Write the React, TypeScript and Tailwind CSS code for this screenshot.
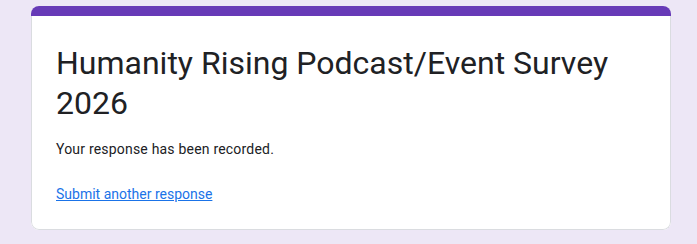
// Confirmation page: form header card with a purple top bar

export default function App() {
  return (
    <div className="min-h-screen bg-[#ede7f6] pt-[6px] pl-[31px]" style={{ fontFamily: "Roboto, Arial, sans-serif" }}>
      <div className="w-[640px] overflow-hidden rounded-lg bg-white">
        <div className="h-[10px] bg-[#673ab7]" />
        <div className="border-x border-b border-[#dadce0] rounded-b-lg px-6 pt-[27px] pb-[23px]">
          <h1 className="text-[32px] leading-[40px] font-normal text-[#202124]">
            Humanity Rising Podcast/Event Survey 2026
          </h1>
          <p className="mt-4 text-sm leading-5 tracking-[0.2px] text-[#202124]">Your response has been recorded.</p>
          <a href="#" className="mt-[25px] inline-block text-sm leading-5 text-[#1a73e8] underline">
            Submit another response
          </a>
        </div>
      </div>
    </div>
  );
}
